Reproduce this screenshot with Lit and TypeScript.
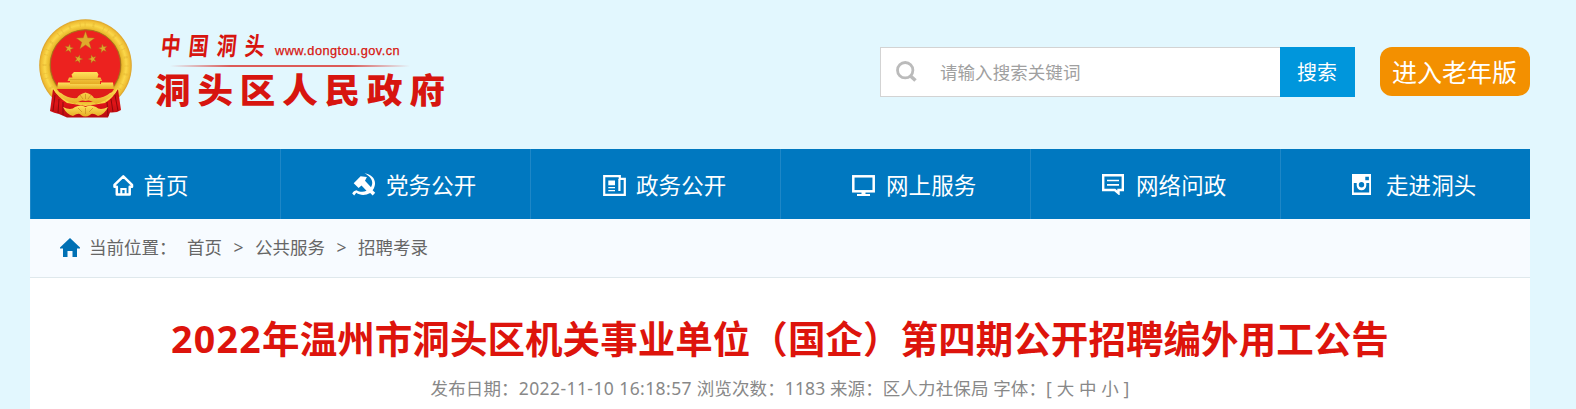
import { LitElement, html, css, svg } from "lit";
import { customElement } from "lit/decorators.js";

const star = (cx: number, cy: number, r: number, turn = 0) => {
  const pts: string[] = [];
  for (let i = 0; i < 10; i++) {
    const a = ((i * 36 - 90 + turn) * Math.PI) / 180;
    const k = i % 2 ? r * 0.4 : r;
    pts.push(`${(cx + k * Math.cos(a)).toFixed(2)},${(cy + k * Math.sin(a)).toFixed(2)}`);
  }
  return svg`<polygon points=${pts.join(" ")} fill="#e0a92c" stroke="#a9611a" stroke-width=".4"/>`;
};

const emblem = html`<svg width="94" height="100" viewBox="0 0 94 100">
  <defs>
    <radialGradient id="ring" cx="50%" cy="50%" r="50%">
      <stop offset=".74" stop-color="#a8741a" />
      <stop offset=".79" stop-color="#e9b92c" />
      <stop offset=".88" stop-color="#fbd84a" />
      <stop offset=".96" stop-color="#efbd33" />
      <stop offset="1" stop-color="#d9a02a" />
    </radialGradient>
    <linearGradient id="gold" x1="0" y1="0" x2="0" y2="1">
      <stop offset="0" stop-color="#ffe25c" />
      <stop offset="1" stop-color="#e6ac24" />
    </linearGradient>
    <linearGradient id="cloth" x1="0" y1="0" x2="0" y2="1">
      <stop offset="0" stop-color="#b90d10" />
      <stop offset=".5" stop-color="#e01518" />
      <stop offset="1" stop-color="#b80b10" />
    </linearGradient>
  </defs>
  <circle cx="46.500" cy="46.500" r="46.300" fill="url(#ring)" />
  <circle cx="46.500" cy="46.500" r="41" fill="none" stroke="#c98e1b" stroke-width="4" stroke-dasharray="1 7 2 9 1 4" opacity=".2" />
  <path d="M14 70 Q19 78 28 84 L46.500 87 L66 84 Q74 79 79 70 L82 91 Q78 94 71 93.500 L69 98.500 H28 L20 95 Q15 94 11 92Z" fill="url(#cloth)" />
  <path d="M16 76l-2 16M20 80l-1 14M24 83l0 13M76 76l3 16M72 80l2 13M68 83l1 14" stroke="#8e080c" stroke-width="1" />
  <circle cx="46.500" cy="46" r="35.200" fill="#ec221f" stroke="#a8701a" stroke-width="1" />
  ${star(46.5, 22, 9.8)}${star(30, 29.5, 4.6, 12)}${star(64, 29.5, 4.6, -12)}${star(39.5, 40, 4.4, 18)}${star(53.5, 40, 4.4, -18)}
  <path d="M35 53h23l1.500 2.500-1 3h3l1.500 3.500h-2v3h-30v-3h-2.500l1.500-3.500h3.500l-1-3z" fill="url(#gold)" />
  <path d="M31 60.500h31" stroke="#d39d26" stroke-width=".7" />
  <path d="M19 63.500h12v1.500h31v-1.500h12l1 6.500h-57z" fill="url(#gold)" />
  <path d="M18 70h57Q69 81 59 83L34 83Q24 80 18 70z" fill="#df1c1a" />
  <path d="M13 68Q16 72 22 74Q29 80 38 79Q40 75 46.500 73.500Q53 75 55 79Q64 80 71 74Q77 72 80 68Q74 80 57 85Q51 80 46.500 82Q42 80 36 85Q19 80 13 68z" fill="url(#gold)" />
  <path d="M24 88Q32 92 36 88Q42 85 46.500 88Q51 85 57 88Q61 92 69 88Q66 95 59 97Q53 93 51 96Q46 99 42 96Q40 93 34 97Q28 96 24 88z" fill="url(#gold)" />
  <path d="M41 76l3 4M46.500 75v5M52 76l-3 4M39 89l4 4M46.500 89v6M54 89l-4 4" stroke="#c78a20" stroke-width=".7" />
</svg>`;

const houseOutline = html`<svg width="21" height="22" viewBox="0 0 21 22" fill="none" stroke="#fff" stroke-width="2.500">
  <path d="M1.500 12.800v-2L10.300 2.300l8.700 8.500v2h-2.300v7.700H3.800v-7.700z" stroke-linejoin="round" />
  <path d="M8.300 20v-5h4.300v5" stroke-width="2" />
</svg>`;

const sickle = html`<svg width="24" height="23" viewBox="0 0 24 23">
  <path d="M12.500.300C20 1.200 24.500 7 22.600 13.200c-.4 1.600-1.100 2.900-2 4l2.600 2.500-2.500 2.800-2.500-2.400c-5 2.700-10.400 2.300-13.900-.3l-2.100 2.700L.200 20.400c1-1.800 2.300-2.800 4.300-3.200 3.600 2 7 2 10 .5L9.500 12.600l-2.900 2.400L1.700 10.200 8.600 3.200l6.300.9-1.900 3.600 6 6.500c3-5 .6-10-6.500-13.900z" fill="#fff" />
</svg>`;

const paper = html`<svg width="23" height="21" viewBox="0 0 23 21">
  <path d="M1.200 1.200h15.600v2.600H21.800v16H1.200z" fill="none" stroke="#fff" stroke-width="2.200" />
  <path d="M16.400 4v12" stroke="#fff" stroke-width="2.200" />
  <path d="M5.300 5.500h6.700v4.800H5.300zM5.300 12h6.700v1.300H5.300zM5.300 15h6.700v1.300H5.300z" fill="#fff" />
</svg>`;

const monitor = html`<svg width="23" height="21" viewBox="0 0 23 21">
  <rect x="1.300" y="1.300" width="20.400" height="15" fill="none" stroke="#fff" stroke-width="2.500" />
  <path d="M9.500 16h4v3h4.500V21H5v-2h4.500z" fill="#fff" />
</svg>`;

const bubble = html`<svg width="22" height="21" viewBox="0 0 22 21">
  <path d="M1.200 1.200h19.600v14.800h-4.300v3.200l-3.700-3.200H1.200z" fill="none" stroke="#fff" stroke-width="2.400" />
  <path d="M5 6.500h12M5 10.800h12" stroke="#fff" stroke-width="1.700" />
</svg>`;

const camera = html`<svg width="20" height="21" viewBox="0 0 20 21">
  <path d="M0 0h19v21H0z" fill="#fff" />
  <path d="M1.800 9H4.700v2.500a4.800 4.800 0 0 0 9.600 0V9h2.900v9.600H1.800zM13.300 2.700h3.600v3.600h-3.600z" fill="#0078c0" />
  <circle cx="9.500" cy="10.700" r="2.700" fill="#0078c0" />
</svg>`;

const nav = [
  { label: "首页", icon: houseOutline, box: "n1" },
  { label: "党务公开", icon: sickle, box: "n2" },
  { label: "政务公开", icon: paper, box: "n3" },
  { label: "网上服务", icon: monitor, box: "n4" },
  { label: "网络问政", icon: bubble, box: "n5" },
  { label: "走进洞头", icon: camera, box: "n6" },
];

@customElement("app-root")
export class AppRoot extends LitElement {
  static styles = css`
    :host {
      display: block;
      height: 409px;
      overflow: hidden;
      background: #e2f7fe;
      font-family: "Noto Sans", "Noto Sans CJK SC", sans-serif;
      font-size: 17.5px;
      color: #666;
    }
    * { box-sizing: border-box; }
    svg { display: block; flex: none; }
    .page { width: 1500px; margin-left: 30px; }
    header { height: 149px; display: flex; align-items: flex-start; }
    .emblem { margin: 19px 0 0 9px; width: 94px; }
    .brand { margin-left: 23px; width: 300px; padding-top: 29px; color: #d7150f; }
    .top { display: flex; height: 36px; padding-left: 5px; }
    .script {
      display: flex; width: 113px; height: 34px;
      font: 700 23px/30px "Noto Sans CJK SC", sans-serif;
    }
    .script span { width: 28px; transform: skewX(-6deg) scale(.86, 1.08); transform-origin: left center; }
    .site { font: 12.750px/20px "Liberation Sans", sans-serif; padding-top: 12px; margin-left: 1px; letter-spacing: .47px; -webkit-text-stroke: .25px #d7150f; }
    .rule { height: 2px; width: 240px; margin-left: 14px; background: linear-gradient(90deg, transparent, #dc5b58 25%, #dc5b58 75%, transparent); }
    .name { font: 900 35.500px/40px "Noto Sans CJK SC", sans-serif; letter-spacing: 6.900px; white-space: nowrap; margin: 2px 0 0 -1px; transform: scaleY(.97); transform-origin: top; }
    .search { display: flex; margin: 47px 0 0 424px; width: 475px; height: 50px; }
    .field { width: 400px; height: 50px; border: 1px solid #d3d3d3; border-right: 0; background: #fff; display: flex; align-items: center; padding: 0 0 1px 15px; color: #a0a0a0; }
    .field span { margin-left: 22px; letter-spacing: .06px; }
    .go { width: 75px; background: #0096dc; color: #fff; font-size: 20px; line-height: 51px; text-align: center; padding-right: 1px; }
    .elder { margin: 47px 0 0 25px; width: 150px; height: 49px; border-radius: 12px; background: #f39000; color: #fff; font-size: 25px; line-height: 50px; text-align: center; padding-right: 1px; }
    nav { display: grid; grid-template-columns: repeat(6, 250px); height: 70px; background: #0078c0; }
    .item { display: flex; align-items: center; border-left: 1px solid #1e87c7; color: #fff; font-size: 22.5px; letter-spacing: .1px; }
    .ico { width: 24px; display: flex; padding-top: 1px; }
    .n1 { padding-left: 82px; } .n1 .ico { width: 30.500px; }
    .n2 { padding-left: 71px; } .n2 .ico { width: 34px; padding: 0; }
    .n3 { padding-left: 72px; } .n3 .ico { width: 33px; padding-top: 2px; }
    .n4 { padding-left: 71px; } .n4 .ico { width: 34px; padding-top: 2px; }
    .n5 { padding-left: 71px; } .n5 .ico { width: 34px; padding-top: 0; }
    .n6 { padding-left: 71px; } .n6 .ico { width: 34px; padding-top: 0; }
    .crumbs { height: 59px; background: #f7fbff; border-bottom: 1px solid #dfe8ec; display: flex; align-items: center; padding: 0 0 3px 30px; }
    .crumbs svg { margin-top: 2px; }
    .where { margin-left: 9px; width: 98px; }
    .gt { width: 33px; text-align: center; }
    main { background: #fff; height: 131px; display: flex; flex-direction: column; align-items: center; }
    h1 { margin: 34px 0 0; color: #dd140c; font: 700 37.5px/54px "Noto Sans", "Noto Sans CJK SC", sans-serif; letter-spacing: .06px; white-space: nowrap; }
    h1 span { letter-spacing: 1.300px; }
    .meta { margin-top: 8px; color: #888; line-height: 28px; white-space: pre; letter-spacing: .12px; }
    .date { letter-spacing: .42px; }
  `;

  render() {
    return html`<div class="page">
      <header>
        <div class="emblem">${emblem}</div>
        <div class="brand">
          <div class="top">
            <div class="script"><span>中</span><span>国</span><span>洞</span><span>头</span></div>
            <div class="site">www.dongtou.gov.cn</div>
          </div>
          <div class="rule"></div>
          <div class="name">洞头区人民政府</div>
        </div>
        <div class="search">
          <div class="field">
            <svg width="22" height="22" viewBox="0 0 22 22" fill="none" stroke="#bbb">
              <circle cx="9.200" cy="9.200" r="7.700" stroke-width="2.800" />
              <path d="M14.500 15l5 4.500" stroke-width="3.600" />
            </svg>
            <span>请输入搜索关键词</span>
          </div>
          <div class="go">搜索</div>
        </div>
        <div class="elder">进入老年版</div>
      </header>
      <nav>
        ${nav.map((n) => html`<div class="item ${n.box}"><div class="ico">${n.icon}</div><span>${n.label}</span></div>`)}
      </nav>
      <div class="crumbs">
        <svg width="20" height="19" viewBox="0 0 20 19"><path d="M10 0l10 9.500v1h-3V19h-4.500v-6h-5v6H3v-8.500H0v-1z" fill="#0070b4" /></svg>
        <span class="where">当前位置：</span><span>首页</span><span class="gt">&gt;</span><span>公共服务</span><span class="gt">&gt;</span><span>招聘考录</span>
      </div>
      <main>
        <h1><span>2022</span>年温州市洞头区机关事业单位（国企）第四期公开招聘编外用工公告</h1>
        <div class="meta">发布日期：<span class="date">2022-11-10 16:18:57</span> 浏览次数：1183 来源：区人力社保局 字体：[ 大 中 小 ]</div>
      </main>
    </div>`;
  }
}
